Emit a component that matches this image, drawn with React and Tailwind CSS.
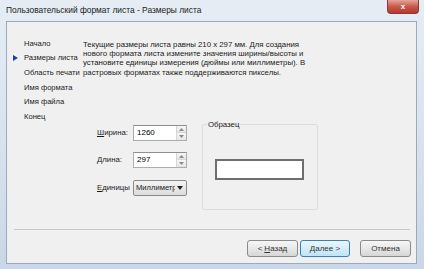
import { useState } from "react";

const navItems = ["Начало", "Размеры листа", "Область печати", "Имя формата", "Имя файла", "Конец"];

const SpinInput = ({ value }) => (
  <div className="flex h-[16px] w-[54px] border border-[#abadb3] border-t-[#8e8f8f] bg-white">
    <span className="flex-1 pl-[3px] pt-[1px] text-[8px] leading-[11px] text-black">{value}</span>
    <div className="flex w-[10px] flex-col border-l border-[#d6d6d6]">
      <div className="flex flex-1 items-center justify-center border-b border-[#d6d6d6] bg-gradient-to-b from-[#f6f6f6] to-[#e6e6e6]">
        <svg width="5" height="3" viewBox="0 0 5 3">
          <path d="M0 3 L2.5 0 L5 3 Z" fill="#8a8a8a" />
        </svg>
      </div>
      <div className="flex flex-1 items-center justify-center bg-gradient-to-b from-[#f6f6f6] to-[#e6e6e6]">
        <svg width="5" height="3" viewBox="0 0 5 3">
          <path d="M0 0 L2.5 3 L5 0 Z" fill="#8a8a8a" />
        </svg>
      </div>
    </div>
  </div>
);

const WinButton = ({ children, primary }) => (
  <button
    className={
      "flex h-[17px] items-center justify-center rounded-[3px] border text-[8px] text-[#333] " +
      (primary
        ? "w-[50px] border-[#3c7fb1] bg-gradient-to-b from-[#eaf6fd] to-[#bfe4f8]"
        : "w-[51px] border-[#8a8a8a] bg-gradient-to-b from-[#f6f6f6] via-[#e8e8e8] to-[#d6d6d6]")
    }
  >
    {children}
  </button>
);

export default function App() {
  const [active] = useState(1);

  return (
    <div
      className="flex h-[269px] w-[424px] flex-col bg-gradient-to-b from-[#e6edf4] via-[#d9e3ee] to-[#c9d7e6] pl-[6px] pr-[7px] pb-[5px]"
      style={{ fontFamily: '"Liberation Sans", Arial, sans-serif' }}
    >
      {/* Title bar */}
      <div className="flex h-[21px] items-start justify-between">
        <span className="pt-[5px] text-[8.4px] leading-[10px] text-[#1b1b1b]">
          Пользовательский формат листа - Размеры листа
        </span>
        <div className="mr-[-2px] flex h-[14px] w-[32px] items-center justify-center rounded-b-[4px] border border-t-0 border-[#8a3a3a] bg-gradient-to-b from-[#e3a59a] via-[#c9574a] to-[#b33a2c]">
          <span className="text-[8px] font-bold leading-none text-white">x</span>
        </div>
      </div>

      {/* Client area */}
      <div className="flex flex-1 flex-col border border-[#9aabbf] bg-[#f0f0f0]">
        <div className="flex">
          {/* Steps */}
          <div className="flex w-[76px] flex-col pt-[14px]">
            {navItems.map((item, i) => (
              <div key={item} className="flex h-[14.7px] items-center text-[7.6px] text-[#1b1b1b]">
                <span className="flex w-[17px] shrink-0 justify-end pr-[6px]">
                  {i === active && (
                    <svg width="5" height="6" viewBox="0 0 5 6">
                      <path d="M0 0 L5 3 L0 6 Z" fill="#1f3fa8" />
                    </svg>
                  )}
                </span>
                <span className="whitespace-nowrap">{item}</span>
              </div>
            ))}
          </div>

          {/* Page content */}
          <div className="flex flex-1 flex-col pt-[18px]">
            <p className="w-[232px] text-[7.8px] leading-[9.2px] text-[#1b1b1b]">
              Текущие размеры листа равны 210 x 297 мм. Для создания нового формата листа измените значения ширины/высоты и установите единицы измерения (дюймы или миллиметры). В растровых форматах также поддерживаются пикселы.
            </p>

            <div className="mt-[43px] flex items-start">
              <div className="ml-[14px] mt-[5px] flex w-[90px] flex-col gap-[11px]">
                <div className="flex items-center justify-between">
                  <span className="text-[7.8px] text-[#1b1b1b]">
                    <span className="underline">Ш</span>ирина:
                  </span>
                  <SpinInput value="1260" />
                </div>
                <div className="flex items-center justify-between">
                  <span className="text-[7.8px] text-[#1b1b1b]">
                    <span className="underline">Д</span>лина:
                  </span>
                  <SpinInput value="297" />
                </div>
                <div className="mt-[1px] flex items-center justify-between">
                  <span className="text-[7.8px] text-[#1b1b1b]">
                    <span className="underline">Е</span>диницы
                  </span>
                  <div className="flex h-[16px] w-[54px] items-center overflow-hidden rounded-[2px] border border-[#8a8a8a] bg-gradient-to-b from-[#f4f4f4] to-[#dcdcdc]">
                    <span className="w-[41px] shrink-0 overflow-hidden whitespace-nowrap pl-[2px] text-[7.6px] text-[#1b1b1b]">Миллиметр</span>
                    <svg width="6" height="4" viewBox="0 0 6 4" className="ml-auto mr-[3px] shrink-0">
                      <path d="M0 0 L6 0 L3 4 Z" fill="#222" />
                    </svg>
                  </div>
                </div>
              </div>

              <fieldset className="ml-[15px] h-[90px] w-[116px] rounded-[2px] border border-[#dcdcdc] px-[12px]">
                <legend className="ml-[-8px] px-[1px] text-[7.8px] leading-[9px] text-[#1b1b1b]">Образец</legend>
                <div className="mt-[30px] h-[21px] w-[89px] border-2 border-[#6e6e6e] bg-white" />
              </fieldset>
            </div>
          </div>
        </div>

        <div className="flex-1" />

        {/* Footer */}
        <div className="ml-[7px] mr-[6px] border-t border-[#c8c8c8]" />
        <div className="flex justify-end pb-[6px] pr-[5px] pt-[10px]">
          <WinButton>
            &lt; <span className="ml-[2px] underline">Н</span>азад
          </WinButton>
          <div className="ml-[2px]">
            <WinButton primary>
              <span className="underline">Д</span>алее &gt;
            </WinButton>
          </div>
          <div className="ml-[10px]">
            <WinButton>Отмена</WinButton>
          </div>
        </div>
      </div>
    </div>
  );
}
